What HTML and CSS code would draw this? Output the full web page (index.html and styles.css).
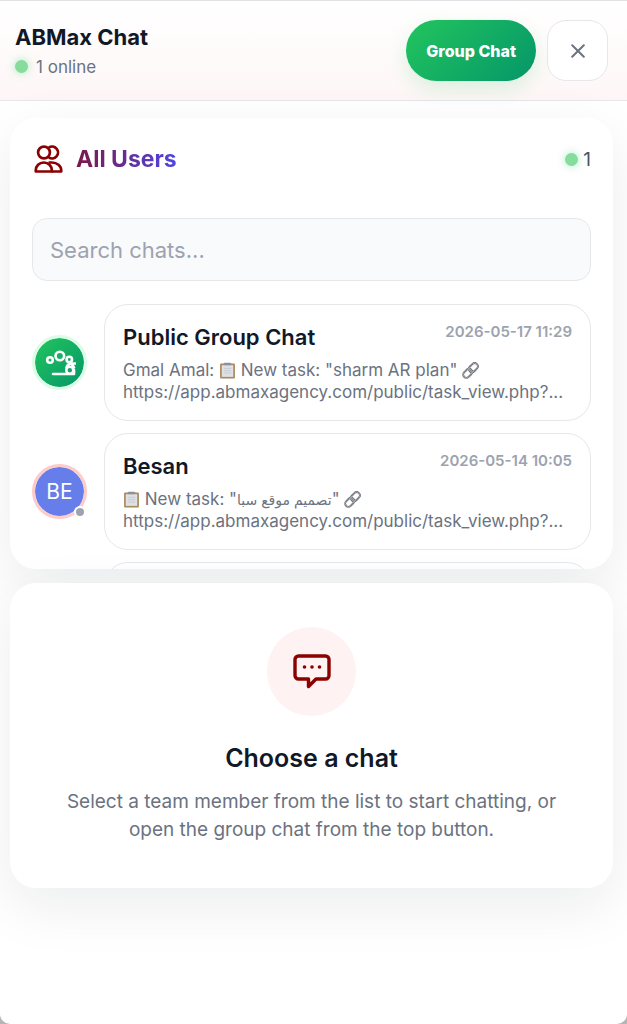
FILE: index.html
```html
<!DOCTYPE html>
<html lang="en">
<head>
    <meta charset="UTF-8">
    <meta name="viewport" content="width=device-width, initial-scale=1.0">
    <title>ABMax Chat</title>
    <link rel="stylesheet" href="styles.css">
</head>
<body>
    <!-- shared emoji drawings -->
    <svg class="defs" width="0" height="0" aria-hidden="true">
        <symbol id="clipboard" viewBox="0 0 16 16">
            <rect x="1" y="1.5" width="14" height="14" rx="1" fill="#a98a5c"/>
            <rect x="2.6" y="3" width="10.8" height="11" fill="#dfe1e5"/>
            <path d="M4.5 6h7M4.5 8.2h7M4.5 10.4h7" stroke="#c3c6cc" stroke-width=".8"/>
            <rect x="4.5" y=".6" width="7" height="2.4" rx=".8" fill="#8d9299"/>
        </symbol>
        <symbol id="link" viewBox="0 0 16 16">
            <g fill="none" transform="rotate(-45 8 8)">
                <rect x="-.5" y="5" width="9.5" height="6" rx="3" stroke="#5c6068" stroke-width="1.7"/>
                <rect x="7" y="5" width="9.5" height="6" rx="3" stroke="#5c6068" stroke-width="1.7"/>
                <rect x="-.5" y="5" width="9.5" height="6" rx="3" stroke="#c9ccd1" stroke-width=".6"/>
                <rect x="7" y="5" width="9.5" height="6" rx="3" stroke="#c9ccd1" stroke-width=".6"/>
            </g>
        </symbol>
    </svg>

    <div class="chat-window">
        <header class="chat-header">
            <div class="brand">
                <h1>ABMax Chat</h1>
                <p class="online"><span class="dot"></span>1 online</p>
            </div>
            <div class="header-actions">
                <button class="group-btn" type="button">Group Chat</button>
                <button class="close-btn" type="button" aria-label="Close">
                    <svg width="14" height="14" viewBox="0 0 14 14" fill="none" stroke="#6b7280" stroke-width="2" stroke-linecap="round">
                        <path d="M1.2 1.2l11.6 11.6M12.8 1.2L1.2 12.8"/>
                    </svg>
                </button>
            </div>
        </header>

        <main class="content">
            <section class="panel users">
                <div class="users-head">
                    <svg width="29" height="29" viewBox="0 0 29 29" fill="none" stroke="#8b0000" stroke-width="2.7" stroke-linejoin="round">
                        <circle cx="10" cy="7.5" r="5.9"/>
                        <path d="M14.8 2.6A5.9 5.9 0 1 1 14.8 12.4"/>
                        <path d="M1.8 26.5v-1.2c0-4.500 3.400-7.800 8-7.800s8 3.300 8 7.800v1.200z"/>
                        <path d="M14.500 17.500h3.500c5 0 9.200 3.300 9.200 7.800v1.200h-9.400"/>
                    </svg>
                    <h2>All Users</h2>
                    <span class="count"><span class="dot"></span>1</span>
                </div>

                <input class="search" type="search" placeholder="Search chats..." aria-label="Search chats">

                <ul class="chat-list">
                    <li class="chat-row">
                        <div class="avatar group">
                            <svg width="32" height="30" viewBox="0 0 32 30" fill="none" stroke="#fff" stroke-width="2.6" stroke-linecap="round" stroke-linejoin="round">
                                <circle cx="6" cy="12" r="2.8"/>
                                <circle cx="15.800" cy="8" r="4.300"/>
                                <circle cx="25.300" cy="11.500" r="2.700"/>
                                <path d="M9 26h21v-4"/>
                                <circle cx="25.800" cy="22.300" r="3.500"/>
                                <path d="M22.500 19.500c.5-2 2-3.500 4-3.800M26.500 15.500h4.500M27.500 15.500l2.500 4"/>
                            </svg>
                        </div>
                        <a class="chat-card" href="#">
                            <span class="card-top">
                                <strong>Public Group Chat</strong>
                                <time>2026-05-17 11:29</time>
                            </span>
                            <span class="preview">Gmal Amal: <svg class="emoji"><use href="#clipboard"/></svg> New task: "sharm AR plan" <svg class="emoji"><use href="#link"/></svg><br>https://app.abmaxagency.com/public/task_view.php?...</span>
                        </a>
                    </li>
                    <li class="chat-row">
                        <div class="avatar">BE<span class="status"></span></div>
                        <a class="chat-card" href="#">
                            <span class="card-top">
                                <strong>Besan</strong>
                                <time>2026-05-14 10:05</time>
                            </span>
                            <span class="preview"><svg class="emoji"><use href="#clipboard"/></svg> New task: "<bdi lang="ar">تصميم موقع سبا</bdi>" <svg class="emoji"><use href="#link"/></svg><br>https://app.abmaxagency.com/public/task_view.php?...</span>
                        </a>
                    </li>
                    <li class="chat-row">
                        <div class="chat-card next"></div>
                    </li>
                </ul>
            </section>

            <section class="panel empty">
                <div class="empty-icon">
                    <svg width="38" height="36" viewBox="0 0 38 36" fill="none" stroke="#8b0000" stroke-width="3.4" stroke-linejoin="round">
                        <path d="M5.5 3h27a3.5 3.5 0 0 1 3.5 3.5v16a3.5 3.5 0 0 1-3.5 3.5H23l-7.500 7.500V26h-10A3.5 3.5 0 0 1 2 22.500v-16A3.5 3.5 0 0 1 5.5 3z"/>
                        <g fill="#8b0000" stroke="none">
                            <circle cx="11.5" cy="14" r="1.8"/>
                            <circle cx="19" cy="14" r="1.8"/>
                            <circle cx="26.5" cy="14" r="1.8"/>
                        </g>
                    </svg>
                </div>
                <h2>Choose a chat</h2>
                <p>Select a team member from the list to start chatting, or open the group chat from the top button.</p>
            </section>
        </main>
    </div>
</body>
</html>
```
FILE: styles.css
```css
* {
    box-sizing: border-box;
}
body {
    margin: 0;
    background: #b5b5b5;
    font-family: Inter, "DejaVu Sans", sans-serif;
    color: #111827;
}
h1, h2, p, ul {
    margin: 0;
    padding: 0;
}
button {
    font-family: inherit;
    cursor: pointer;
}
.defs {
    position: absolute;
}
.chat-window {
    min-height: 100vh;
    background: #fff;
    border-top: 1px solid #e2e2e4;
    border-radius: 0 0 10px 10px;
    overflow: hidden;
}

/* header */
.chat-header {
    display: flex;
    justify-content: space-between;
    align-items: center;
    padding: 19px 19px 19px 15px;
    background: linear-gradient(180deg, #fff 0%, #fef6f6 100%);
    border-bottom: 1px solid #e5e7eb;
}
.brand h1 {
    font-size: 22px;
    line-height: 32px;
    font-weight: 700;
}
.online {
    display: flex;
    align-items: center;
    gap: 8px;
    font-size: 17px;
    line-height: 28px;
    color: #6b7280;
}
.dot {
    width: 13px;
    height: 13px;
    border-radius: 50%;
    background: #86dc9a;
    box-shadow: 0 0 8px rgba(74, 222, 128, 0.5);
}
.header-actions {
    display: flex;
    gap: 11px;
}
.group-btn {
    height: 61px;
    padding: 0 20px;
    border: none;
    border-radius: 31px;
    background: linear-gradient(135deg, #22c55e, #059669);
    box-shadow: 0 8px 20px rgba(34, 197, 94, 0.16);
    color: #fff;
    font-size: 16px;
    font-weight: 800;
}
.close-btn {
    display: flex;
    justify-content: center;
    align-items: center;
    width: 61px;
    height: 61px;
    padding: 0;
    border: 1px solid #e5e7eb;
    border-radius: 19px;
    background: #fff;
}

/* panels */
.content {
    display: flex;
    flex-direction: column;
    gap: 14px;
    padding: 17px 14px 17px 10px;
}
.panel {
    background: #fff;
    border-radius: 26px;
    box-shadow: 0 18px 56px rgba(15, 23, 42, 0.08);
}
.users {
    height: 44vh;
    min-height: 300px;
    padding: 22px 22px 0;
    display: flex;
    flex-direction: column;
    overflow: hidden;
}
.users-head {
    display: flex;
    align-items: center;
    height: 38px;
    padding-left: 2px;
    margin-bottom: 40px;
    flex-shrink: 0;
}
.users-head h2 {
    margin-left: 13px;
    font-size: 23px;
    line-height: 32px;
    font-weight: 700;
    background: linear-gradient(90deg, #7b1747, #4f46e5);
    -webkit-background-clip: text;
    background-clip: text;
    color: transparent;
}
.count {
    display: flex;
    align-items: center;
    gap: 5px;
    margin-left: auto;
    font-size: 19px;
    color: #4b5563;
}
.search {
    width: 100%;
    height: 63px;
    flex-shrink: 0;
    padding: 0 17px;
    border: 1px solid #e5e7eb;
    border-radius: 15px;
    background: #f9fafb;
    font-family: inherit;
    font-size: 22px;
    color: #111827;
}
.search::placeholder {
    color: #9ca3af;
    opacity: 1;
}

/* chat list */
.chat-list {
    display: flex;
    flex-direction: column;
    gap: 12px;
    margin-top: 23px;
    list-style: none;
}
.chat-row {
    display: flex;
    align-items: center;
    justify-content: flex-end;
    gap: 17px;
}
.avatar {
    position: relative;
    display: flex;
    justify-content: center;
    align-items: center;
    width: 55px;
    height: 55px;
    flex-shrink: 0;
    border: 3px solid #fecaca;
    border-radius: 50%;
    background: #667eea;
    background-clip: padding-box;
    color: #fff;
    font-size: 21px;
}
.avatar.group {
    border-color: #dcfce7;
    background: linear-gradient(135deg, #22c55e, #059669) padding-box;
}
.status {
    position: absolute;
    right: -2px;
    bottom: -2px;
    width: 12px;
    height: 12px;
    border: 2px solid #fff;
    border-radius: 50%;
    background: #9ca3af;
}
.chat-card {
    flex: 1;
    min-width: 0;
    padding: 16px 18px 17px;
    border: 1px solid #e5e7eb;
    border-radius: 24px;
    background: #fff;
    color: inherit;
    text-decoration: none;
}
.chat-card.next {
    height: 117px;
    margin-left: 72px;
}
.card-top {
    display: flex;
    justify-content: space-between;
    align-items: flex-start;
    margin-bottom: 6px;
}
.card-top strong {
    font-size: 22px;
    line-height: 32px;
    font-weight: 600;
}
.card-top time {
    font-size: 15px;
    line-height: 22px;
    font-weight: 600;
    color: #9ca3af;
}
.preview {
    display: block;
    overflow: hidden;
    white-space: nowrap;
    font-size: 17px;
    line-height: 22px;
    color: #6b7280;
}
.preview bdi {
    font-size: 14px;
    line-height: 1;
}
.emoji {
    width: 17px;
    height: 17px;
    vertical-align: -3px;
}

/* empty state */
.empty {
    padding: 44px 40px;
    text-align: center;
}
.empty-icon {
    display: flex;
    justify-content: center;
    align-items: center;
    width: 89px;
    height: 89px;
    margin: 0 auto 24px;
    border-radius: 50%;
    background: #fef2f2;
}
.empty h2 {
    margin-bottom: 12px;
    font-size: 25px;
    line-height: 36px;
    font-weight: 600;
}
.empty p {
    font-size: 19px;
    line-height: 28px;
    color: #6b7280;
}
```
